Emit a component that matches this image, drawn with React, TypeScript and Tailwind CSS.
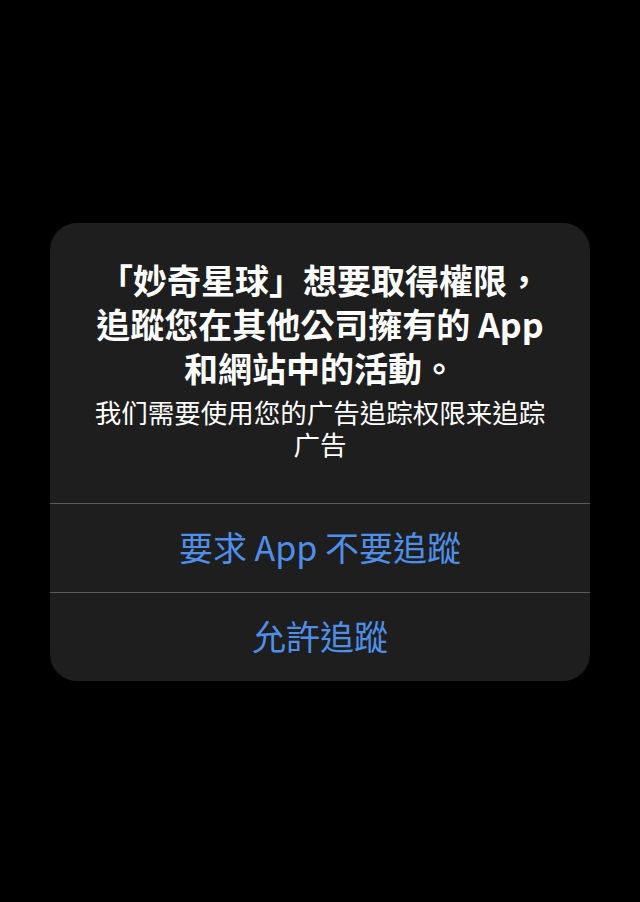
const CJK = '"Noto Sans CJK TC", "Noto Sans CJK SC", "Noto Sans", sans-serif'

function AlertButton({ label, last }: { label: string; last?: boolean }) {
  return (
    <button
      className={`flex h-[89px] w-full items-center justify-center border-t border-[#5a5a5c] pb-[3px] text-[34px] leading-none text-[#4f8fe9] ${
        last ? 'rounded-b-[27px]' : ''
      }`}
    >
      {label}
    </button>
  )
}

export default function App() {
  return (
    <div className="flex h-[902px] w-[640px] items-start justify-center bg-black pt-[223px]" style={{ fontFamily: CJK }}>
      <div className="w-[540px] overflow-hidden rounded-[27px] bg-[#1e1e1e]">
        <div className="px-[38px] pb-[43px] pt-[35px] text-center">
          <h1 className="mb-[6px] text-[34px] font-bold leading-[44px] text-white">
            「妙奇星球」想要取得權限，追蹤您在其他公司擁有的 App 和網站中的活動。
          </h1>
          <p className="text-[26.5px] leading-[32px] text-white">
            我们需要使用您的广告追踪权限来追踪广告
          </p>
        </div>
        <AlertButton label="要求 App 不要追蹤" />
        <AlertButton label="允許追蹤" last />
      </div>
    </div>
  )
}
